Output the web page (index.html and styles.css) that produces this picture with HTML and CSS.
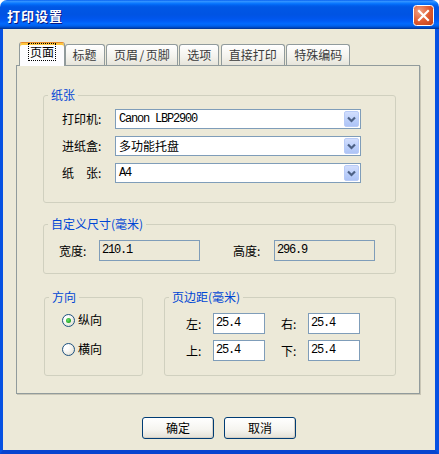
FILE: index.html
```
<!DOCTYPE html>
<html lang="zh-CN">
<head>
<meta charset="utf-8">
<title>打印设置</title>
<link rel="stylesheet" href="styles.css">
</head>
<body>
<div class="window">
  <div class="titlebar">
    <span class="title">打印设置</span>
    <span class="close">
      <svg width="21" height="21" viewBox="0 0 21 21">
        <defs>
          <radialGradient id="cg" cx="0.3" cy="0.3" r="0.9">
            <stop offset="0" stop-color="#F0A083"/>
            <stop offset="0.55" stop-color="#E05B31"/>
            <stop offset="1" stop-color="#C2411A"/>
          </radialGradient>
        </defs>
        <rect x="0.5" y="0.5" width="20" height="20" rx="3" fill="url(#cg)" stroke="#fff"/>
        <path d="M6 6 L15 15 M15 6 L6 15" stroke="#fff" stroke-width="2.2" stroke-linecap="square"/>
      </svg>
    </span>
  </div>
  <div class="frame">
    <div class="tabs">
      <div class="tab active"><span class="focus">页面</span></div>
      <div class="tab">标题</div>
      <div class="tab">页眉<span class="slash">/</span>页脚</div>
      <div class="tab">选项</div>
      <div class="tab">直接打印</div>
      <div class="tab">特殊编码</div>
    </div>
    <div class="panel">
      <fieldset class="group g-paper">
        <legend>纸张</legend>
        <div class="group-body paper-body">
          <div class="srow">
            <span class="slabel">打印机:</span>
            <div class="select"><span class="stext mono">Canon LBP2900</span><span class="drop"><svg width="15" height="16" viewBox="0 0 15 16"><path d="M4 6.5 L7.5 10 L11 6.5" fill="none" stroke="#4D6185" stroke-width="2.2"/></svg></span></div>
          </div>
          <div class="srow">
            <span class="slabel">进纸盒:</span>
            <div class="select"><span class="stext">多功能托盘</span><span class="drop"><svg width="15" height="16" viewBox="0 0 15 16"><path d="M4 6.5 L7.5 10 L11 6.5" fill="none" stroke="#4D6185" stroke-width="2.2"/></svg></span></div>
          </div>
          <div class="srow">
            <span class="slabel">纸　张:</span>
            <div class="select"><span class="stext mono">A4</span><span class="drop"><svg width="15" height="16" viewBox="0 0 15 16"><path d="M4 6.5 L7.5 10 L11 6.5" fill="none" stroke="#4D6185" stroke-width="2.2"/></svg></span></div>
          </div>
        </div>
      </fieldset>

      <fieldset class="group g-size">
        <legend>自定义尺寸(毫米)</legend>
        <div class="group-body size-body">
          <span class="wlabel">宽度:</span>
          <div class="field ro mono">210.1</div>
          <span class="hlabel">高度:</span>
          <div class="field ro mono">296.9</div>
        </div>
      </fieldset>

      <div class="lower">
        <fieldset class="group g-orient">
          <legend>方向</legend>
          <div class="group-body orient-body">
            <div class="rrow"><span class="radio checked"><span class="dot"></span></span><span class="rtext">纵向</span></div>
            <div class="rrow"><span class="radio"></span><span class="rtext">横向</span></div>
          </div>
        </fieldset>
        <fieldset class="group g-margin">
          <legend>页边距(毫米)</legend>
          <div class="group-body margin-body">
            <div class="mrow">
              <span class="mlabel">左:</span><div class="mfield mono">25.4</div>
              <span class="mlabel second">右:</span><div class="mfield mono">25.4</div>
            </div>
            <div class="mrow">
              <span class="mlabel">上:</span><div class="mfield mono">25.4</div>
              <span class="mlabel second">下:</span><div class="mfield mono">25.4</div>
            </div>
          </div>
        </fieldset>
      </div>
    </div>
    <div class="buttons">
      <div class="btn">确定</div>
      <div class="btn">取消</div>
    </div>
  </div>
</div>
</body>
</html>
```
FILE: styles.css
```
* { box-sizing: border-box; }
html, body { margin: 0; padding: 0; }
body {
  width: 439px;
  height: 454px;
  background: #ffffff;
  font-family: "Noto Sans CJK SC", "Noto Sans", sans-serif;
  font-size: 12px;
  color: #000;
  overflow: hidden;
}
.mono {
  font-family: "Liberation Mono", "DejaVu Sans Mono", monospace;
  font-size: 12px;
  letter-spacing: -1.2px;
}
.window {
  width: 439px;
  height: 454px;
  border-radius: 7px 7px 0 0;
  overflow: hidden;
  display: flex;
  flex-direction: column;
}
.titlebar {
  height: 29px;
  flex: none;
  display: flex;
  align-items: center;
  padding: 0 5px 0 7px;
  background: linear-gradient(#0058EE 0%, #3593FF 4%, #288EFF 7%, #127DFF 10%, #036FFC 14%, #0262EE 18%, #0057E5 24%, #0054E3 50%, #0055EB 62%, #005BF5 72%, #026AFE 82%, #0062EF 88%, #0052D6 93%, #0040AB 97%, #003092 100%);
}
.title {
  flex: 1;
  color: #fff;
  font-weight: bold;
  font-size: 13px;
  letter-spacing: 1px;
  line-height: 16px;
  margin-top: 2px;
  text-shadow: 1px 1px 0 #0A1883;
}
.close {
  width: 21px;
  height: 21px;
  display: block;
  margin-top: 1px;
}
.close svg { display: block; }
.frame {
  flex: 1;
  display: flex;
  flex-direction: column;
  background: #ECE9D8;
  border-style: solid;
  border-color: #0651E2;
  border-width: 0 4px 4px 3px;
  border-bottom-color: #0744CF;
  padding-top: 13px;
}
.tabs {
  display: flex;
  align-items: flex-end;
  gap: 1.5px;
  height: 23px;
  margin-left: 13px;
  padding-left: 5px;
  position: relative;
  z-index: 2;
}
.tab {
  height: 21px;
  padding: 0 7px;
  border: 1px solid #919B9C;
  border-bottom: 0;
  border-radius: 3px 3px 0 0;
  background: linear-gradient(#FFFFFF, #F3F2EC 60%, #E6E4DA);
  line-height: 20px;
  color: #3A3A3A;
  white-space: nowrap;
}
.slash { margin: 0 1.5px; }
.tab.active {
  height: 24px;
  margin: 0 -2px -1px -2px;
  padding: 0 10px;
  border-top: 1px solid #E68B2C;
  box-shadow: inset 0 2px 0 #FFC73C;
  background: #FCFCFE;
  color: #000;
  line-height: 14px;
  padding-top: 2px;
}
.focus {
  display: inline-block;
  line-height: 14px;
  outline: 1px dotted #000;
  outline-offset: 1px;
}
.panel {
  width: 404px;
  margin-left: 13px;
  border: 1px solid #919B9C;
  background: #ECE9D8;
  box-shadow: 1px 1px 0 #C9C6B6;
  padding: 22px 0 17px 26px;
  position: relative;
  z-index: 1;
}
.group {
  margin: 0;
  padding: 0;
  min-width: 0;
  border: 1px solid #D0D0BF;
  border-radius: 3px;
}
.group legend {
  margin-left: 4px;
  padding: 0 3px;
  color: #0046D5;
  line-height: 14px;
  font-size: 12px;
}
.g-paper, .g-size { width: 353px; }
.paper-body { padding: 7px 0 19px 18px; }
.srow {
  display: flex;
  align-items: center;
  height: 20px;
  margin-bottom: 7px;
}
.srow:last-child { margin-bottom: 0; }
.slabel { width: 53px; line-height: 14px; }
.select {
  width: 246px;
  height: 20px;
  border: 1px solid #7F9DB9;
  background: #fff;
  display: flex;
  align-items: center;
}
.stext { padding-left: 3px; line-height: 18px; flex: 1; }
.drop {
  width: 15px;
  height: 16px;
  margin-right: 1px;
  border: 1px solid #B8CBF7;
  border-radius: 2px;
  background: linear-gradient(#D2DEFD, #BACEFA 60%, #AEC4F6);
  display: block;
}
.drop svg { display: block; margin: -1px; }
.g-size { margin-top: 14px; }
.size-body {
  padding: 9px 0 12px 15px;
  display: flex;
  align-items: center;
}
.wlabel { width: 40px; }
.hlabel { width: 41px; margin-left: 33px; }
.field {
  width: 101px;
  height: 21px;
  border: 1px solid #7F9DB9;
  padding-left: 2px;
  line-height: 19px;
}
.field.ro { background: #ECE9D8; }
.lower {
  display: flex;
  gap: 21px;
  margin-top: 16px;
}
.g-orient { width: 99px; margin-left: 1px; }
.g-margin { width: 232px; }
.orient-body { padding: 8px 0 0 17px; }
.rrow {
  display: flex;
  align-items: center;
  height: 16px;
  margin-bottom: 13px;
}
.radio {
  width: 13px;
  height: 13px;
  border-radius: 50%;
  border: 1px solid #1C5180;
  background: radial-gradient(circle at 30% 30%, #FFFFFF 20%, #F0EFE8 55%, #D4D1C3 100%);
  display: flex;
  align-items: center;
  justify-content: center;
  flex: none;
}
.dot {
  width: 5px;
  height: 5px;
  border-radius: 50%;
  background: radial-gradient(circle at 40% 40%, #6BE36B, #21A121 70%, #1A861A);
}
.rtext { margin-left: 3px; line-height: 14px; }
.margin-body { padding: 9px 0 14px 21px; }
.mrow {
  display: flex;
  align-items: center;
  height: 21px;
  margin-bottom: 6px;
}
.mrow:last-child { margin-bottom: 0; }
.mlabel { width: 27px; }
.mlabel.second { margin-left: 16px; }
.mfield {
  width: 52px;
  height: 21px;
  border: 1px solid #7F9DB9;
  background: #fff;
  padding-left: 2px;
  line-height: 19px;
}
.buttons {
  display: flex;
  justify-content: center;
  gap: 10px;
  margin-top: 23px;
}
.btn {
  width: 72px;
  height: 22px;
  border: 1px solid #003C74;
  border-radius: 3px;
  background: linear-gradient(#FFFFFF, #F5F4EF 60%, #E3E0D5);
  box-shadow: inset -1px -1px 0 #D6D0C5;
  text-align: center;
  line-height: 20px;
}
```
